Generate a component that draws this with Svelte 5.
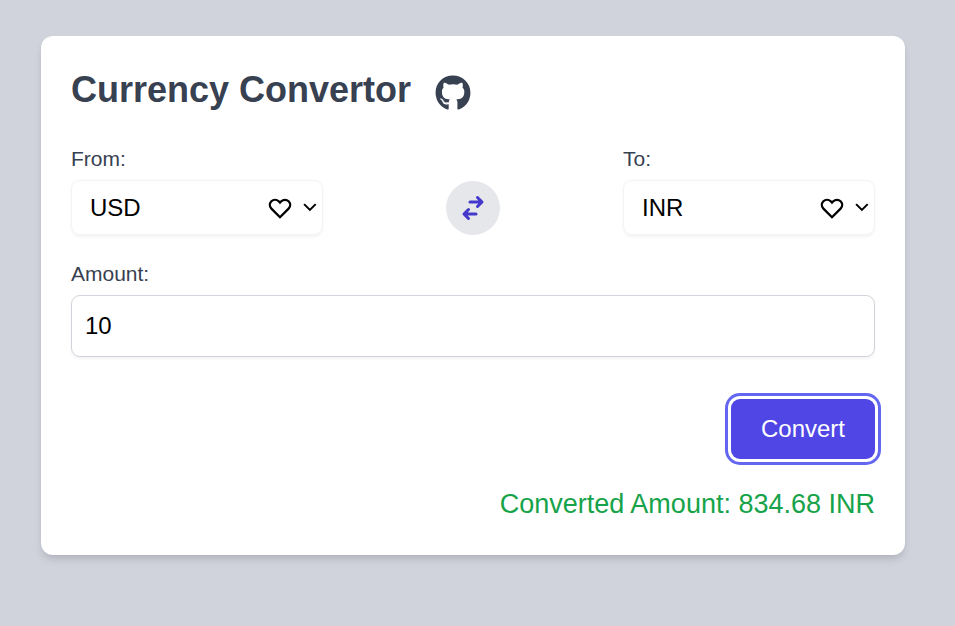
<script>
  let amount = $state('10');
</script>

{#snippet picker(label, code)}
  <div class="field">
    <span class="label">{label}</span>
    <div class="select">
      <span>{code}</span>
      <span class="tools">
        <svg width="24" height="24" viewBox="0 0 24 24" fill="none" stroke="currentColor" stroke-width="2.3"><path d="M12 21.2 3.4 12.6A5.15 5.15 0 0 1 10.7 5.3L12 6.6l1.3-1.3a5.15 5.15 0 0 1 7.3 7.3Z" /></svg>
        <svg class="chevron" width="14" height="9" viewBox="0 0 14 9" fill="none" stroke="currentColor" stroke-width="2"><path d="m1.1 1.1 5.8 5.8 5.8-5.8" /></svg>
      </span>
    </div>
  </div>
{/snippet}

<main>
  <section class="card">
    <header>
      <h1>Currency Convertor</h1>
      <svg width="36" height="36" viewBox="0 0 496 512" fill="currentColor"><path d="M165.9 397.4c0 2-2.3 3.6-5.2 3.6-3.3.3-5.6-1.3-5.6-3.6 0-2 2.3-3.6 5.2-3.6 3-.3 5.6 1.3 5.6 3.6zm-31.1-4.5c-.7 2 1.3 4.3 4.3 4.9 2.6 1 5.6 0 6.2-2s-1.3-4.3-4.3-5.2c-2.6-.7-5.5.3-6.2 2.3zm44.2-1.7c-2.9.7-4.9 2.6-4.6 4.9.3 2 2.9 3.3 5.9 2.6 2.9-.7 4.9-2.6 4.6-4.6-.3-1.9-3-3.2-5.9-2.9zM244.8 8C106.1 8 0 113.3 0 252c0 110.9 69.8 205.8 169.5 239.2 12.8 2.3 17.3-5.6 17.3-12.1 0-6.2-.3-40.4-.3-61.4 0 0-70 15-84.7-29.8 0 0-11.4-29.1-27.8-36.6 0 0-22.9-15.7 1.6-15.4 0 0 24.9 2 38.6 25.8 21.9 38.6 58.6 27.5 72.9 20.9 2.3-16 8.8-27.1 16-33.7-55.9-6.2-112.3-14.3-112.3-110.5 0-27.5 7.6-41.3 23.6-58.9-2.6-6.5-11.1-33.3 2.6-67.9 20.9-6.5 69 27 69 27 20-5.6 41.5-8.5 62.8-8.5s42.8 2.9 62.8 8.5c0 0 48.1-33.6 69-27 13.7 34.7 5.2 61.4 2.6 67.9 16 17.7 25.8 31.5 25.8 58.9 0 96.5-58.9 104.2-114.8 110.5 9.2 7.9 17 22.9 17 46.4 0 33.7-.3 75.4-.3 83.6 0 6.5 4.6 14.4 17.3 12.1C428.2 457.8 496 362.9 496 252 496 113.3 383.5 8 244.8 8zM97.2 352.9c-1.3 1-1 3.3.7 5.2 1.6 1.6 3.9 2.3 5.2 1 1.3-1 1-3.3-.7-5.2-1.6-1.6-3.9-2.3-5.2-1zm-10.8-8.1c-.7 1.3.3 2.9 2.3 3.9 1.6 1 3.6.7 4.3-.7.7-1.3-.3-2.9-2.3-3.9-2-.6-3.6-.3-4.3.7zm32.4 35.6c-1.6 1.3-1 4.3 1.3 6.2 2.3 2.3 5.2 2.6 6.5 1 1.3-1.3.7-4.3-1.3-6.2-2.2-2.3-5.2-2.6-6.5-1zm-11.4-14.7c-1.6 1-1.6 3.6 0 5.9 1.6 2.3 4.3 3.3 5.6 2.3 1.6-1.3 1.6-3.9 0-6.2-1.4-2.3-4-3.3-5.6-2z" /></svg>
    </header>

    <div class="currencies">
      {@render picker('From:', 'USD')}
      <button class="swap" aria-label="Swap currencies">
        <svg width="30" height="30" viewBox="0 0 20 20" fill="currentColor"><path d="M8 5a1 1 0 100 2h5.586l-1.293 1.293a1 1 0 001.414 1.414l3-3a1 1 0 000-1.414l-3-3a1 1 0 10-1.414 1.414L13.586 5H8zM12 15a1 1 0 100-2H6.414l1.293-1.293a1 1 0 10-1.414-1.414l-3 3a1 1 0 000 1.414l3 3a1 1 0 001.414-1.414L6.414 15H12z" /></svg>
      </button>
      {@render picker('To:', 'INR')}
    </div>

    <label class="label" for="amount">Amount:</label>
    <input id="amount" type="text" bind:value={amount} />

    <div class="actions">
      <button class="convert">Convert</button>
    </div>
    <p class="result">Converted Amount: 834.68 INR</p>
  </section>
</main>

<style>
  :global(body) {
    margin: 0;
    background: #d0d3dc;
  }
  main {
    box-sizing: border-box;
    height: 626px;
    padding: 36px 50px 0 41px;
    background: #d0d3dc;
    font-family: 'Liberation Sans', Arial, sans-serif;
  }
  .card {
    box-sizing: border-box;
    height: 519px;
    padding: 30px;
    background: #fff;
    border-radius: 12px;
    box-shadow: 0 6px 9px -1.5px rgb(0 0 0 / 0.1), 0 3px 6px -3px rgb(0 0 0 / 0.1);
  }
  header {
    display: flex;
    align-items: flex-start;
    height: 48px;
    color: #374151;
  }
  h1 {
    margin: 0;
    font-size: 36px;
    line-height: 48px;
    font-weight: 700;
  }
  header svg {
    margin: 9px 0 0 24px;
  }
  .currencies {
    display: flex;
    justify-content: space-between;
    align-items: flex-end;
    margin-top: 30px;
    margin-bottom: 24px;
  }
  .field {
    width: 252px;
  }
  .label {
    display: block;
    font-size: 21px;
    line-height: 30px;
    color: #374151;
  }
  .select {
    box-sizing: border-box;
    display: flex;
    align-items: center;
    justify-content: space-between;
    height: 55px;
    margin-top: 6px;
    padding: 0 5px 0 18px;
    border: 1px solid #f3f4f6;
    border-radius: 9px;
    box-shadow: 0 1.5px 3px rgb(0 0 0 / 0.05);
    font-size: 24px;
    color: #000;
  }
  .tools {
    display: flex;
    align-items: center;
    gap: 11.5px;
  }
  .chevron {
    margin-bottom: 1px;
  }
  .swap {
    display: grid;
    place-items: center;
    width: 54px;
    height: 54px;
    padding: 0;
    border: 0;
    border-radius: 50%;
    background: #e5e7eb;
    color: #4338ca;
  }
  input {
    box-sizing: border-box;
    display: block;
    width: 100%;
    height: 62px;
    margin: 6px 0 0;
    padding: 0 13px;
    border: 1px solid #d1d5db;
    border-radius: 9px;
    box-shadow: 0 1.5px 3px rgb(0 0 0 / 0.05);
    font: 24px 'Liberation Sans', Arial, sans-serif;
    color: #000;
  }
  .actions {
    display: flex;
    justify-content: flex-end;
    margin-top: 42px;
  }
  .convert {
    width: 144px;
    height: 60px;
    padding: 0;
    border: 0;
    border-radius: 9px;
    background: #4f46e5;
    color: #fff;
    font: 24px 'Liberation Sans', Arial, sans-serif;
    box-shadow: 0 0 0 3px #fff, 0 0 0 6px #6366f1;
  }
  .result {
    margin: 24px 0 0;
    font-size: 27px;
    line-height: 42px;
    text-align: right;
    color: #16a34a;
  }
</style>
